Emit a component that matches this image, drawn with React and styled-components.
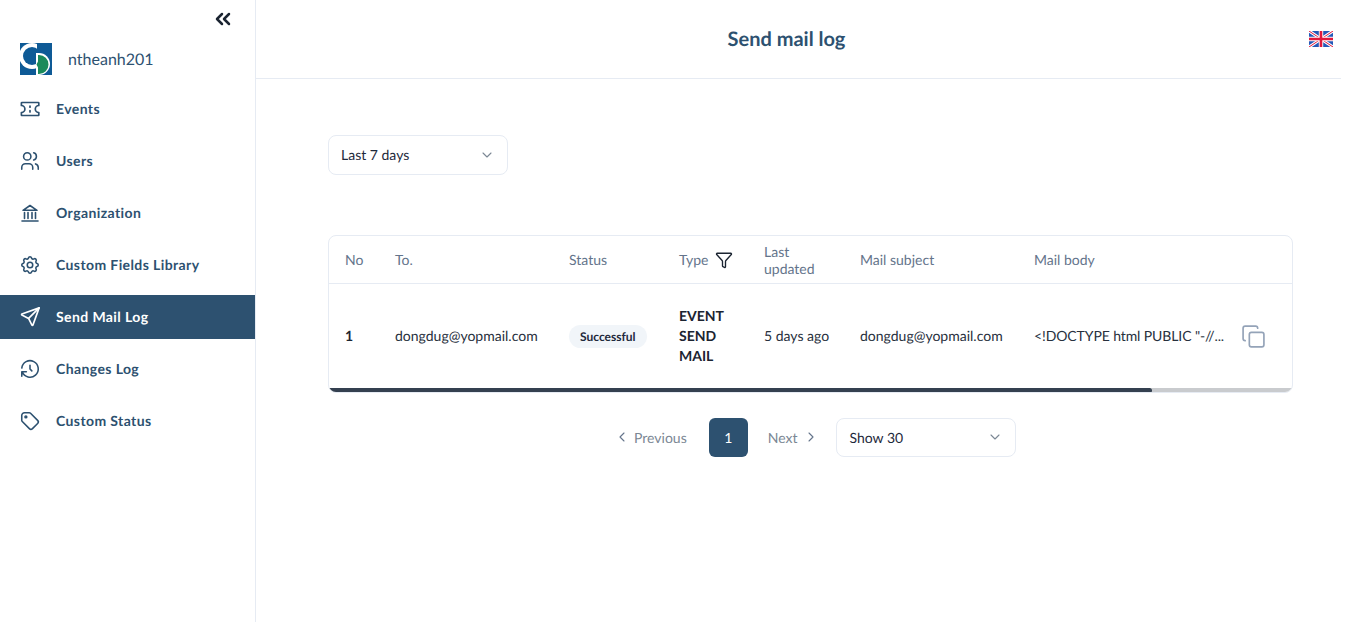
import React from "react";
import styled, { createGlobalStyle } from "styled-components";
import { ChevronDown, ChevronLeft, ChevronRight, ChevronsLeft, Copy, Filter } from "lucide-react";
import { TbUsers, TbSettings, TbSend, TbHistory, TbTag } from "react-icons/tb";

const Global = createGlobalStyle`
  html, body { margin: 0; padding: 0; background: #fff; }
  body {
    font-family: Lato, "Liberation Sans", sans-serif;
    color: #1e293b;
    text-rendering: geometricPrecision;
  }
  * { box-sizing: border-box; }
`;

const Page = styled.div`
  display: flex;
  width: 1341px;
  height: 622px;
  overflow: hidden;
`;
const Sidebar = styled.aside`
  width: 256px;
  flex: none;
  border-right: 1px solid #e6ebf3;
  display: flex;
  flex-direction: column;
`;
const Collapse = styled.div`
  height: 43px;
  display: flex;
  justify-content: flex-end;
  padding: 7px 20px 0 0;
  color: #1b2431;
`;
const Brand = styled.div`
  height: 32px;
  display: flex;
  align-items: center;
  gap: 16px;
  padding-left: 20px;
  margin-bottom: 12px;
  font-size: 16px;
  color: #2d5170;
`;
const Nav = styled.nav`
  display: flex;
  flex-direction: column;
  gap: 8px;
`;
const NavItem = styled.div`
  height: 44px;
  display: flex;
  align-items: center;
  gap: 16px;
  padding: 0 0 1px 20px;
  font-size: 14px;
  font-weight: 700;
  letter-spacing: 0.4px;
  color: ${(p) => (p.$active ? "#fff" : "#2d5170")};
  background: ${(p) => (p.$active ? "#2d5170" : "transparent")};
`;
const IconSlot = styled.span`
  width: 20px;
  height: 24px;
  flex: none;
  display: flex;
  align-items: center;
  justify-content: center;
  svg { flex: none; }
`;
const Main = styled.main`
  flex: 1;
  min-width: 0;
  display: flex;
  flex-direction: column;
`;
const Header = styled.header`
  height: 79px;
  flex: none;
  border-bottom: 1px solid #e6ebf3;
  display: flex;
  align-items: center;
  justify-content: center;
  position: relative;
`;
const Title = styled.h1`
  margin: 0 24px 0 0;
  font-size: 20px;
  font-weight: 700;
  color: #2d5170;
`;
const Flag = styled.svg`
  position: absolute;
  right: 8px;
  top: 31px;
`;
const Content = styled.div`
  padding: 56px 48px 0 72px;
  display: flex;
  flex-direction: column;
`;
const Select = styled.div`
  width: 180px;
  height: ${(p) => p.$height}px;
  border: 1px solid #e6ebf3;
  border-radius: 8px;
  display: flex;
  align-items: center;
  justify-content: space-between;
  padding: 0 12px 1px;
  font-size: 14px;
  color: #1e293b;
  svg { color: #7b8794; }
`;
const TableCard = styled.div`
  margin-top: 60px;
  width: 965px;
  height: 158px;
  border: 1px solid #e6ebf3;
  border-radius: 8px;
  overflow: hidden;
  display: flex;
  flex-direction: column;
`;
const Row = styled.div`
  display: grid;
  grid-template-columns: 50px 174px 110px 85px 96px 174px 1fr;
  align-items: center;
  height: ${(p) => p.$height}px;
  flex: none;
  border-bottom: ${(p) => (p.$head ? "1px solid #e6ebf3" : "none")};
`;
const HeadCell = styled.div`
  padding-left: 16px;
  font-size: 14px;
  line-height: 17px;
  color: #64748b;
  display: flex;
  align-items: center;
  gap: 6px;
  svg { color: #1b2431; }
`;
const Cell = styled.div`
  padding-left: 16px;
  font-size: 14px;
  line-height: 20px;
  font-weight: ${(p) => (p.$bold ? 700 : 400)};
  color: ${(p) => (p.$bold ? "#1b2431" : "#27303d")};
`;
const BodyCell = styled(Cell)`
  display: flex;
  align-items: center;
  justify-content: space-between;
  padding-right: 26px;
  white-space: nowrap;
  letter-spacing: -0.1px;
  svg { color: #94a3b8; }
`;
const Badge = styled.span`
  display: inline-block;
  height: 23px;
  line-height: 23px;
  padding: 0 11px;
  border-radius: 12px;
  background: #f1f5f9;
  font-size: 12px;
  font-weight: 700;
  color: #1e293b;
`;
const Track = styled.div`
  height: 5px;
  flex: none;
  background: #c9cbce;
  margin-top: auto;
`;
const Thumb = styled.div`
  width: 823px;
  height: 100%;
  background: #344050;
  border-radius: 0 3px 3px 0;
`;
const Pager = styled.div`
  margin-top: 25px;
  width: 965px;
  display: flex;
  align-items: center;
  padding-left: 286px;
  height: 39px;
`;
const PageLink = styled.span`
  display: flex;
  align-items: center;
  gap: ${(p) => p.$gap}px;
  padding-bottom: 1px;
  font-size: 14px;
  color: #7b8794;
  svg { color: #64748b; }
`;
const PageNum = styled.div`
  width: 39px;
  height: 39px;
  margin: 0 20px 0 22px;
  border-radius: 6px;
  background: #2d5170;
  color: #fff;
  font-size: 14px;
  display: flex;
  align-items: center;
  justify-content: center;
`;
const PagerSelect = styled.div`
  margin-left: 17px;
`;

const TicketIcon = () => (
  <svg width="20" height="20" viewBox="0 0 20 20" fill="none" stroke="currentColor" strokeWidth="1.7" strokeLinecap="round" strokeLinejoin="round">
    <path d="M2 3.5h16.2a.6.6 0 0 1 .6.6v2.4a3.5 3.5 0 0 0 0 7v2.4a.6.6 0 0 1-.6.6H2a.6.6 0 0 1-.6-.6v-2.4a3.5 3.5 0 0 0 0-7V4.1a.6.6 0 0 1 .6-.6Z" />
    <path d="M10 7v1.2M10 11.6v1.4" />
  </svg>
);

const BankIcon = () => (
  <svg width="20" height="20" viewBox="0 0 20 20" fill="none" stroke="currentColor" strokeWidth="1.6" strokeLinecap="round" strokeLinejoin="round">
    <path d="M3 7.3 10 2.5l7 4.8Z" />
    <path d="M4.5 9.5v6M8 9.5v6M12 9.5v6M15.5 9.5v6" />
    <path d="M2 18h16" />
  </svg>
);

const Logo = () => (
  <svg width="32" height="32" viewBox="0 0 32 32" style={{ flex: "none" }}>
    <rect width="32" height="32" fill="#0e5a96" />
    <circle cx="12" cy="13" r="13" fill="#fff" />
    <circle cx="12" cy="13" r="9" fill="#0e5a96" />
    <rect x="17" y="0" width="15" height="9" fill="#0e5a96" />
    <rect x="19" y="9" width="13" height="23" fill="#0e5a96" />
    <path d="M16 10h3a11 11 0 0 1 0 22h-3Z" fill="#fff" />
    <path d="M18 12h1a9.5 9.5 0 0 1 0 19h-1v-6.5l-1.5-3 1.5-3Z" fill="#1b8a5a" />
  </svg>
);

const UkFlag = () => (
  <Flag width="24" height="16" viewBox="0 0 24 16">
    <rect width="24" height="16" fill="#2458b8" />
    <path d="M0 0L24 16M24 0L0 16" stroke="#fff" strokeWidth="3" />
    <path d="M0 0L24 16M24 0L0 16" stroke="#e0183c" strokeWidth="1" />
    <path d="M12 0V16M0 8H24" stroke="#fff" strokeWidth="4.4" />
    <path d="M12 0V16M0 8H24" stroke="#e0183c" strokeWidth="2.6" />
  </Flag>
);

const nav = [
  ["Events", <TicketIcon />],
  ["Users", <TbUsers size={22} strokeWidth={1.7} />],
  ["Organization", <BankIcon />],
  ["Custom Fields Library", <TbSettings size={22} strokeWidth={1.7} />],
  ["Send Mail Log", <TbSend size={23} strokeWidth={1.7} />, true],
  ["Changes Log", <TbHistory size={22} strokeWidth={1.7} />],
  ["Custom Status", <TbTag size={22} strokeWidth={1.7} />],
];

export default function App() {
  return (
    <Page>
      <Global />
      <Sidebar>
        <Collapse><ChevronsLeft size={24} strokeWidth={2.5} /></Collapse>
        <Brand><Logo />ntheanh201</Brand>
        <Nav>
          {nav.map(([label, icon, active]) => (
            <NavItem key={label} $active={active}><IconSlot>{icon}</IconSlot>{label}</NavItem>
          ))}
        </Nav>
      </Sidebar>
      <Main>
        <Header>
          <Title>Send mail log</Title>
          <UkFlag />
        </Header>
        <Content>
          <Select $height={40}>Last 7 days<ChevronDown size={16} strokeWidth={1.6} /></Select>
          <TableCard>
            <Row $head $height={48}>
              <HeadCell>No</HeadCell>
              <HeadCell>To.</HeadCell>
              <HeadCell>Status</HeadCell>
              <HeadCell>Type<Filter size={18} strokeWidth={1.8} /></HeadCell>
              <HeadCell>Last<br />updated</HeadCell>
              <HeadCell>Mail subject</HeadCell>
              <HeadCell>Mail body</HeadCell>
            </Row>
            <Row $height={104}>
              <Cell $bold>1</Cell>
              <Cell>dongdug@yopmail.com</Cell>
              <Cell><Badge>Successful</Badge></Cell>
              <Cell $bold>EVENT<br />SEND<br />MAIL</Cell>
              <Cell>5 days ago</Cell>
              <Cell>dongdug@yopmail.com</Cell>
              <BodyCell>{'<!DOCTYPE html PUBLIC "-//...'}<Copy size={25} strokeWidth={1.6} /></BodyCell>
            </Row>
            <Track><Thumb /></Track>
          </TableCard>
          <Pager>
            <PageLink $gap={4}><ChevronLeft size={16} strokeWidth={1.6} />Previous</PageLink>
            <PageNum>1</PageNum>
            <PageLink $gap={6}>Next<ChevronRight size={16} strokeWidth={1.6} /></PageLink>
            <PagerSelect><Select $height={39}>Show 30<ChevronDown size={16} strokeWidth={1.6} /></Select></PagerSelect>
          </Pager>
        </Content>
      </Main>
    </Page>
  );
}
